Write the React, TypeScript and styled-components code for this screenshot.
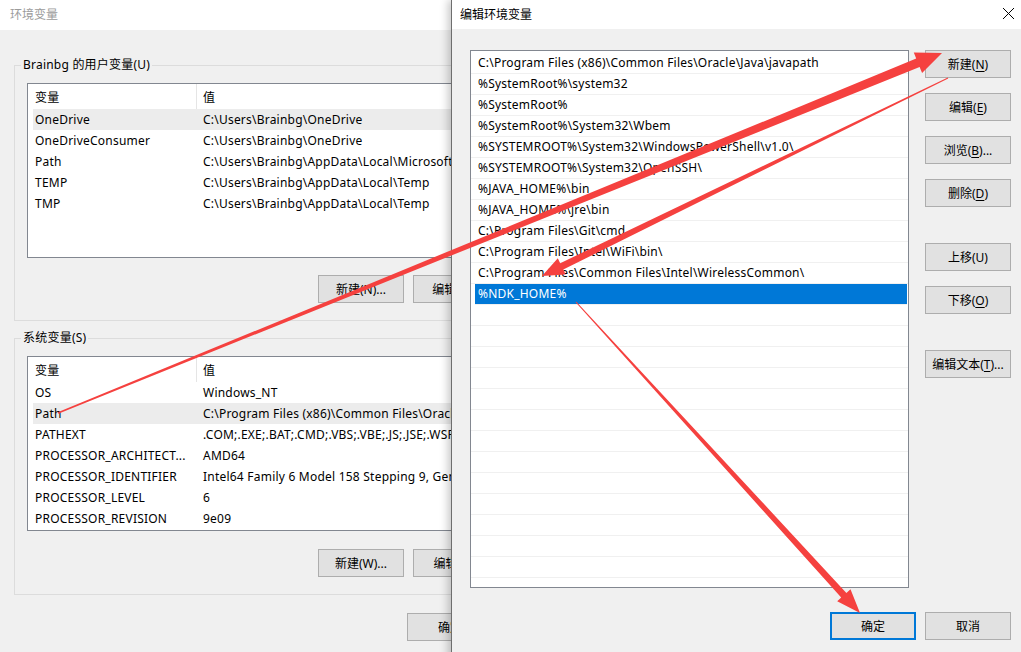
import React from "react";
import styled, { createGlobalStyle } from "styled-components";

const GlobalStyle = createGlobalStyle`
  html, body {
    margin: 0;
    padding: 0;
  }
  body {
    width: 1021px;
    height: 652px;
    overflow: hidden;
    background: #f0f0f0;
    font-family: "Noto Sans", "Noto Sans CJK SC", sans-serif;
    font-size: 12px;
    letter-spacing: 0.22px;
    color: #000;
  }
`;

const Desktop = styled.div`
  position: relative;
  width: 1021px;
  height: 652px;
  overflow: hidden;
  background: #f0f0f0;
`;

// windows sit on the desktop at their own place
const Window = styled.div<{ $left: number; $width: number; $front?: boolean }>`
  position: absolute;
  top: 0;
  left: ${(p) => p.$left}px;
  width: ${(p) => p.$width}px;
  height: 700px;
  display: flex;
  flex-direction: column;
  background: #f0f0f0;
  border-left: ${(p) => (p.$front ? "1px solid #6e6e6e" : "none")};
  box-shadow: ${(p) => (p.$front ? "-3px 0 8px rgba(0, 0, 0, 0.22)" : "none")};
`;

const TitleBar = styled.div<{ $height: number; $pad: number }>`
  height: ${(p) => p.$height}px;
  flex: none;
  background: #fff;
  display: flex;
  align-items: center;
  justify-content: space-between;
  padding: 0 7px 0 ${(p) => p.$pad}px;
`;

const Title = styled.span<{ $inactive?: boolean }>`
  color: ${(p) => (p.$inactive ? "#9b9b9b" : "#000")};
  line-height: 16px;
  letter-spacing: 0;
`;

const CloseIcon = styled.svg`
  width: 13px;
  height: 13px;
  margin-bottom: 3px;
`;

const BackBody = styled.div`
  display: flex;
  flex-direction: column;
  padding: 0 14px;
`;

const Group = styled.fieldset<{ $mt: number }>`
  margin: ${(p) => p.$mt}px 0 0;
  padding: 10px 12px 17px;
  border: 1px solid #dcdcdc;
  min-width: 0;
  display: flex;
  flex-direction: column;
`;

const Legend = styled.legend`
  padding: 0 2px;
  margin-left: -6px;
  line-height: 16px;
`;

const VarList = styled.div`
  height: 175px;
  box-sizing: border-box;
  border: 1px solid #828790;
  background: #fff;
  overflow: hidden;
`;

const VarRow = styled.div<{ $header?: boolean; $hot?: boolean }>`
  display: grid;
  grid-template-columns: 164px 1fr;
  margin-left: 5px;
  height: ${(p) => (p.$header ? 25 : 21)}px;
  align-items: center;
  background: ${(p) => (p.$hot ? "#ececec" : "transparent")};
  white-space: nowrap;
`;

const NameCell = styled.div<{ $header?: boolean }>`
  padding-left: 2px;
  height: 100%;
  display: flex;
  align-items: center;
  overflow: hidden;
  border-right: ${(p) => (p.$header ? "1px solid #e5e5e5" : "none")};
`;

const ValueCell = styled.div`
  padding-left: 6px;
  overflow: hidden;
`;

const ButtonRow = styled.div<{ $mt: number; $mr?: number }>`
  display: flex;
  justify-content: flex-end;
  gap: 9px;
  margin-top: ${(p) => p.$mt}px;
  margin-right: ${(p) => p.$mr ?? 0}px;
`;

const Button = styled.button<{ $primary?: boolean; $mt?: number }>`
  width: 86px;
  height: 28px;
  flex: none;
  box-sizing: border-box;
  margin: ${(p) => p.$mt ?? 0}px 0 0;
  padding: 0;
  font: inherit;
  color: #000;
  background: #e1e1e1;
  border: ${(p) => (p.$primary ? "2px solid #0078d7" : "1px solid #adadad")};
  white-space: nowrap;
`;

const Key = styled.span`
  text-decoration: underline;
  text-underline-offset: 2px;
`;

const FrontBody = styled.div`
  display: grid;
  grid-template-columns: 439px 86px;
  column-gap: 16px;
  row-gap: 24px;
  padding: 21px 0 0 18px;
`;

const PathList = styled.div`
  height: 538px;
  box-sizing: border-box;
  border: 1px solid #828790;
  padding-top: 2px;
  background: #fff;
  overflow: hidden;
`;

const PathRow = styled.div<{ $selected?: boolean }>`
  height: 21px;
  box-sizing: border-box;
  border-bottom: 1px solid #f0f0f0;
  line-height: 20px;
  white-space: nowrap;
  margin-left: ${(p) => (p.$selected ? 4 : 0)}px;
  margin-right: ${(p) => (p.$selected ? 1 : 0)}px;
  padding-left: ${(p) => (p.$selected ? 3 : 7)}px;
  background: ${(p) => (p.$selected ? "#0078d7" : "transparent")};
  color: ${(p) => (p.$selected ? "#fff" : "#000")};
`;

const SideButtons = styled.div`
  display: flex;
  flex-direction: column;
`;

const Footer = styled.div`
  grid-column: 1 / span 2;
  display: flex;
  justify-content: flex-end;
  gap: 9px;
`;

const Overlay = styled.svg`
  position: absolute;
  inset: 0;
  width: 1021px;
  height: 652px;
  pointer-events: none;
  z-index: 10;
`;

const userVars = [
  ["OneDrive", "C:\\Users\\Brainbg\\OneDrive"],
  ["OneDriveConsumer", "C:\\Users\\Brainbg\\OneDrive"],
  ["Path", "C:\\Users\\Brainbg\\AppData\\Local\\Microsoft\\WindowsApps;"],
  ["TEMP", "C:\\Users\\Brainbg\\AppData\\Local\\Temp"],
  ["TMP", "C:\\Users\\Brainbg\\AppData\\Local\\Temp"],
];

const systemVars = [
  ["OS", "Windows_NT"],
  ["Path", "C:\\Program Files (x86)\\Common Files\\Oracle\\Java\\javapath;"],
  ["PATHEXT", ".COM;.EXE;.BAT;.CMD;.VBS;.VBE;.JS;.JSE;.WSF;.WSH;.MSC"],
  ["PROCESSOR_ARCHITECT...", "AMD64"],
  ["PROCESSOR_IDENTIFIER", "Intel64 Family 6 Model 158 Stepping 9, GenuineIntel"],
  ["PROCESSOR_LEVEL", "6"],
  ["PROCESSOR_REVISION", "9e09"],
];

const paths = [
  "C:\\Program Files (x86)\\Common Files\\Oracle\\Java\\javapath",
  "%SystemRoot%\\system32",
  "%SystemRoot%",
  "%SystemRoot%\\System32\\Wbem",
  "%SYSTEMROOT%\\System32\\WindowsPowerShell\\v1.0\\",
  "%SYSTEMROOT%\\System32\\OpenSSH\\",
  "%JAVA_HOME%\\bin",
  "%JAVA_HOME%\\jre\\bin",
  "C:\\Program Files\\Git\\cmd",
  "C:\\Program Files\\Intel\\WiFi\\bin\\",
  "C:\\Program Files\\Common Files\\Intel\\WirelessCommon\\",
  "%NDK_HOME%",
];

const EMPTY_ROWS = 14;

// tapered arrow, thin at the tail and thick near the head
const arrowPoints = (
  x1: number,
  y1: number,
  x2: number,
  y2: number,
  tail: number,
  shaft: number,
  headLen: number,
  headW: number
) => {
  const dx = x2 - x1;
  const dy = y2 - y1;
  const len = Math.hypot(dx, dy);
  const ux = dx / len;
  const uy = dy / len;
  const nx = -uy;
  const ny = ux;
  const bx = x2 - ux * headLen;
  const by = y2 - uy * headLen;
  const pts = [
    [x1 + (nx * tail) / 2, y1 + (ny * tail) / 2],
    [bx + (nx * shaft) / 2, by + (ny * shaft) / 2],
    [bx + (nx * headW) / 2, by + (ny * headW) / 2],
    [x2, y2],
    [bx - (nx * headW) / 2, by - (ny * headW) / 2],
    [bx - (nx * shaft) / 2, by - (ny * shaft) / 2],
    [x1 - (nx * tail) / 2, y1 - (ny * tail) / 2],
  ];
  return pts.map((p) => p.map((v) => v.toFixed(1)).join(",")).join(" ");
};

const VarTable = ({ rows, hot }: { rows: string[][]; hot: number }) => (
  <VarList>
    <VarRow $header>
      <NameCell $header>变量</NameCell>
      <ValueCell>值</ValueCell>
    </VarRow>
    {rows.map(([name, value], i) => (
      <VarRow key={name} $hot={i === hot}>
        <NameCell>{name}</NameCell>
        <ValueCell>{value}</ValueCell>
      </VarRow>
    ))}
  </VarList>
);

const App = () => {
  return (
    <Desktop>
      <GlobalStyle />

      <Window $left={0} $width={621}>
        <TitleBar $height={30} $pad={10}>
          <Title $inactive>环境变量</Title>
        </TitleBar>
        <BackBody>
          <Group $mt={27}>
            <Legend>Brainbg 的用户变量(U)</Legend>
            <VarTable rows={userVars} hot={0} />
            <ButtonRow $mt={17}>
              <Button>新建(N)...</Button>
              <Button>编辑(E)...</Button>
              <Button>删除(D)</Button>
            </ButtonRow>
          </Group>
          <Group $mt={9}>
            <Legend>系统变量(S)</Legend>
            <VarTable rows={systemVars} hot={1} />
            <ButtonRow $mt={18}>
              <Button>新建(W)...</Button>
              <Button>编辑(I)...</Button>
              <Button>删除(L)</Button>
            </ButtonRow>
          </Group>
          <ButtonRow $mt={18} $mr={19}>
            <Button>确定</Button>
            <Button>取消</Button>
          </ButtonRow>
        </BackBody>
      </Window>

      <Window $left={451} $width={570} $front>
        <TitleBar $height={29} $pad={8}>
          <Title>编辑环境变量</Title>
          <CloseIcon viewBox="0 0 13 13">
            <path d="M1 1 L12 12 M12 1 L1 12" stroke="#000" strokeWidth="1" fill="none" />
          </CloseIcon>
        </TitleBar>
        <FrontBody>
          <PathList>
            {paths.map((p, i) => (
              <PathRow key={p} $selected={i === paths.length - 1}>
                {p}
              </PathRow>
            ))}
            {Array.from({ length: EMPTY_ROWS }).map((_, i) => (
              <PathRow key={"empty" + i} />
            ))}
          </PathList>
          <SideButtons>
            <Button>
              新建(<Key>N</Key>)
            </Button>
            <Button $mt={15}>
              编辑(<Key>E</Key>)
            </Button>
            <Button $mt={15}>
              浏览(<Key>B</Key>)...
            </Button>
            <Button $mt={15}>
              删除(<Key>D</Key>)
            </Button>
            <Button $mt={36}>上移(U)</Button>
            <Button $mt={15}>
              下移(<Key>O</Key>)
            </Button>
            <Button $mt={36}>
              编辑文本(<Key>T</Key>)...
            </Button>
          </SideButtons>
          <Footer>
            <Button $primary>确定</Button>
            <Button>取消</Button>
          </Footer>
        </FrontBody>
      </Window>

      <Overlay viewBox="0 0 1021 652">
        <polygon points={arrowPoints(58, 413, 942, 53, 1.5, 9, 26, 22)} fill="#f5413f" />
        <polygon points={arrowPoints(948, 78, 542, 276, 1, 7, 22, 18)} fill="#f5413f" />
        <polygon points={arrowPoints(576, 302, 860, 613, 1, 7, 24, 18)} fill="#f5413f" />
      </Overlay>
    </Desktop>
  );
};

export default App;
